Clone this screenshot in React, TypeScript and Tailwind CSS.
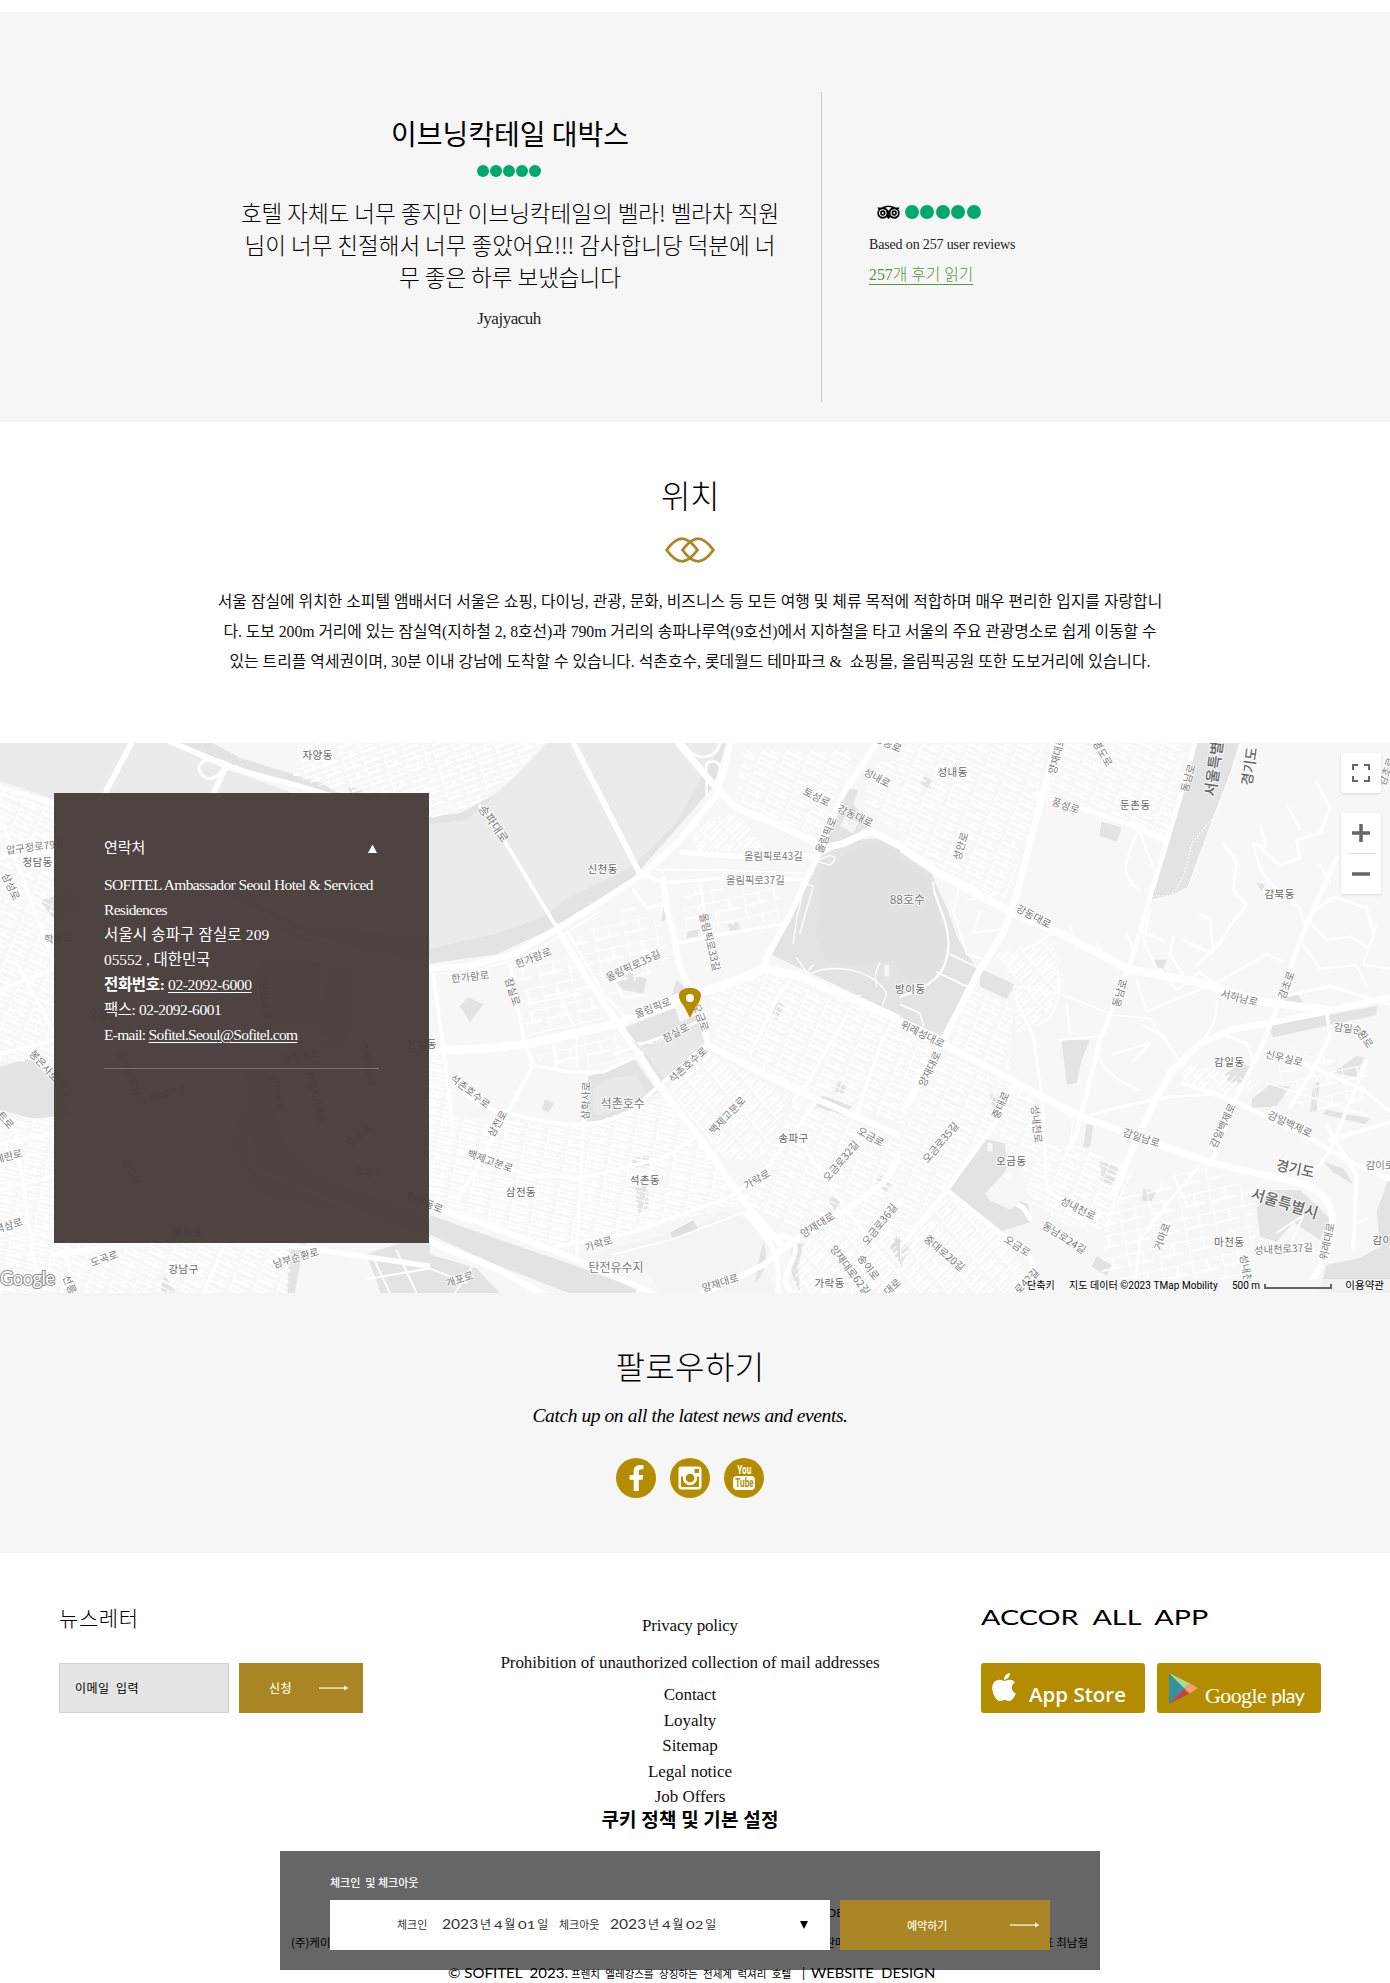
import React from "react";
import { FaApple, FaFacebookF } from "react-icons/fa";

const KR = "font-['Noto_Sans_CJK_KR',sans-serif]";
const SERIF = "font-['Liberation_Serif','Noto_Sans_CJK_KR',serif]";

/* ---------- Map data: three neighbouring sheets, each with its own grid ---------- */

type Label = [string, number, number, number, number?, number?];
type Shape = [string, string];
type Road = [string, number];

interface Sheet {
  x: number;
  width: number;
  areas: Shape[];
  blocks: [string, string][];
  roads: Road[];
  after: Shape[];
  labels: Label[];
}

const WATER = "#ebebeb";
const PARK = "#e3e3e3";
const LAND = "#f7f7f7";

const west: Sheet = {
  x: 0,
  width: 1410,
  areas: [
    ["M0 0H500L620 60 880 150 1287 225 1410 235V575L1287 570 900 520 600 370 300 240 160 165 0 115Z", WATER],
    ["M500 0L600 40 900 140 1287 225 1410 235V205L1287 200 1100 190 960 120 720 50 620 0Z", PARK],
    ["M1287 560L1410 575V610L1287 615 900 560 600 400 640 390 900 520Z", PARK],
    ["M120 450L220 420 240 470 160 500Z", PARK],
    ["M0 915L90 890 160 960 215 1050 100 1060 0 1035Z", PARK],
    ["M780 620H960L950 800 780 780ZM980 650L1060 640 1040 870 960 850Z", PARK],
    ["M730 930H810L830 1100 940 1220 1287 1340 1410 1390V1470L1100 1330 780 1270 700 1140Z", PARK],
    ["M1100 1440L1260 1390 1410 1450V1568H1150Z", PARK],
    ["M490 1490L540 1568H480ZM870 1410H920L900 1470 880 1568H860Z", PARK],
    ["M1040 130L1090 140 1060 160Z", PARK],
  ],
  blocks: [
    ["M0 130L160 180V900L0 900Z", "url(#g2)"],
    ["M0 1060L162 1060V1568H0Z", "url(#g1)"],
    ["M900 0H1410V190L1287 200 1100 180 880 100Z", "url(#g3)"],
    ["M162 1408H880L860 1568H162Z", "url(#g2)"],
    ["M1287 1000H1410V1370L1287 1330Z", "url(#g1)"],
    ["M300 700H720V1200L400 1350 180 1200Z", "url(#g2)"],
  ],
  roads: [
    ["M0 132L160 178 300 250 600 400 900 540 1287 640 1410 630", 12],
    ["M0 150L160 198", 4],
    ["M395 8L320 140 280 240", 16],
    ["M670 90L640 150 540 380", 16],
    ["M500 0L700 80 900 130 1040 170 1287 210 1410 185", 16],
    ["M690 70C640 40 580 60 600 90S650 110 670 80", 9],
    ["M720 80C700 60 660 90 650 130", 8],
    ["M0 330L160 310M0 210L120 520 160 620", 9],
    ["M0 880L162 840M0 700L162 640M60 640L162 820", 10],
    ["M0 1130L160 1100M0 1260L162 1220M40 1060L120 1568", 10],
    ["M162 1440L500 1400 900 1420 1410 1490", 15],
    ["M700 600L720 900 760 1200 1287 1400 1410 1460", 18],
    ["M600 1568L680 1400 690 1250M220 1568L200 1420", 8],
    ["M160 620L500 760 1287 880 1410 870", 14],
    ["M1120 1450L1180 1568M1190 1430L1260 1568M1100 1510L1410 1460", 6],
    ["M1287 700L1410 690M1300 720L1310 860M1380 640L1390 860", 7],
    ["M1287 1040L1410 1060M1300 1290L1370 1060", 6],
  ],
  after: [["M1375 775L1410 730V830L1385 800Z", PARK]],
  labels: [
    ["자양동", 953, 42, 0, 10.5, 500],
    ["압구정로79길", 105, 299, -7],
    ["청담동", 113, 343, 0, 10.5, 500],
    ["삼성로", 35, 412, 65],
    ["학동로", 175, 555, -5],
    ["봉은사로59길", 155, 935, 48],
    ["삼성동", 310, 770, 0, 10.5, 500],
    ["트로", 18, 1065, 48],
    ["테란로", 25, 1166, -15],
    ["역삼로", 25, 1360, -17],
    ["도곡로", 312, 1452, -20],
    ["강남구", 551, 1481, 0, 10.5, 500],
    ["남부순환로", 887, 1450, -16],
    ["대치동", 562, 1378, 0, 10.5, 500],
    ["삼성로", 398, 1210, 62],
    ["테헤란로", 505, 992, -14],
    ["테헤란로87길", 395, 947, 66],
    ["탄천동로", 832, 990, 80],
    ["올림픽로4길", 948, 1000, 75],
    ["올림픽로", 903, 886, -9],
    ["탄천동로", 800, 730, 82],
    ["백제고분로", 1105, 908, 76],
    ["도곡로", 1076, 1110, -40],
    ["유수지", 1105, 1213, 0, 11.5],
    ["탄천동로", 1275, 1296, 21],
    ["잠실동", 1265, 852, 0, 10.5, 500],
    ["선릉", 211, 1526, 68],
  ],
};

const centre: Sheet = {
  x: 430,
  width: 1440,
  areas: [
    ["M0 235C130 225 230 130 360 0H890L850 130 700 290 600 390 360 530 200 600 0 625Z", WATER],
    ["M890 0L850 130 700 290 610 385 350 535 200 600 0 625V585L210 540 350 490 400 450 530 390 620 345 740 230 810 110Z", PARK],
    ["M0 235L110 225 200 150 160 170 90 205 0 215Z", PARK],
    ["M1165 330L1265 280 1360 275 1440 300V785L1022 600Z", PARK],
    ["M1165 370L1260 310 1340 285 1440 330V690L1390 620 1270 630 1190 620 1150 540 1175 480Z", "#e1e1e1"],
    ["M1250 135L1285 140 1270 180 1320 240 1210 300 1190 290Z", PARK],
    ["M585 805L735 750 750 790 800 770 830 850 695 965 Z", PARK],
    ["M472 942L525 930 615 895 682 985 545 1068 472 1072Z", PARK],
    ["M0 1330L150 1380 400 1460 620 1535 610 1568H470L200 1470 0 1385Z", PARK],
    ["M0 1440L140 1480 230 1568H0Z", PARK],
    ["M700 1568L650 1480 450 1445 780 1370 880 1320 950 1340 1020 1420 1000 1470 1050 1568Z", "#f4f4f4"],
    ["M560 680L600 650 650 670 640 710 580 700Z", PARK],
    ["M90 745L115 720 160 740 120 790Z", PARK],
    ["M1155 1030L1175 995 1270 1025 1240 1050 1210 1040Z", PARK],
    ["M605 1170L655 1165 658 1195 610 1200ZM615 1255L655 1240V1310L625 1325Z", PARK],
    ["M720 1380L790 1345 805 1370 730 1395Z", "#dedede"],
    ["M1380 1420L1400 1390 1440 1400V1470L1410 1465Z", "#dedede"],
    ["M893 515L925 510 930 530 900 535ZM770 535L805 530V550L770 555Z", PARK],
    ["M1025 760L1045 730 1062 745 1040 785ZM1215 985L1225 955 1250 965 1240 992Z", PARK],
    ["M1195 1290L1215 1270 1235 1290 1215 1315ZM1335 1240L1350 1220 1385 1245 1370 1265Z", PARK],
    ["M335 1035L345 1005 372 1018 355 1042Z", PARK],
    ["M700 470L710 500 695 510ZM725 715L740 670 770 700Z", PARK],
    ["M1000 1410C1020 1450 1000 1500 975 1520L990 1440ZM1090 1410C1070 1460 1090 1520 1110 1545L1105 1480 1120 1410Z", PARK],
  ],
  blocks: [
    ["M0 0H350L240 110 120 190 0 220Z", "url(#g3)"],
    ["M430 560L600 460 700 520 720 620 540 720Z", "url(#g4)"],
    ["M840 690L1010 650 1440 800V1090L1100 970 850 850Z", "url(#g2)"],
    ["M830 870L1080 1000 1000 1180 860 1170 710 980Z", "url(#g5)"],
    ["M0 1050L460 1080 700 1000 850 1180 940 1300 400 1420 0 1310Z", "url(#g1)"],
    ["M0 890L50 880 80 1080 0 1060Z", "url(#g1)"],
    ["M1100 1000L1440 1140V1400L1100 1380 920 1290 1000 1180Z", "url(#g2)"],
    ["M940 30H1280L1220 220 1140 260 910 190Z", "url(#g2)"],
    ["M1330 60H1440V280L1300 190Z", "url(#g2)"],
    ["M260 630L430 600 520 780 290 830Z", "url(#g4)"],
    ["M320 830L540 810 600 890 500 920 320 900Z", "url(#g4)"],
    ["M760 420L1050 410V500L760 540Z", "url(#g4)"],
    ["M780 240L920 200 1000 300 800 320Z", "url(#g5)"],
    ["M1120 1400L1380 1350 1440 1568H1080Z", "url(#g5)"],
  ],
  roads: [
    ["M430 8L630 375", 17],
    ["M150 185L235 300 370 510 390 530", 11],
    ["M0 640L120 632 250 600 380 530 500 462 640 375 740 290 860 155 890 60 900 8", 17],
    ["M0 655L130 650 280 605 400 545 510 480", 4],
    ["M745 8L850 125 920 190 1050 240 1190 300 1240 290 1320 255 1440 310", 20],
    ["M1440 310L1400 285", 8],
    ["M830 155C830 60 820 60 850 60S870 100 850 130M760 8C800 70 860 50 870 8", 7],
    ["M755 315L900 325 1150 325", 14],
    ["M680 362L900 365 1150 375", 5],
    ["M700 400L900 385 1120 390", 9],
    ["M700 390L710 470 730 540 745 620 775 690 810 780 835 855 1000 935 1170 1010 1440 1120", 18],
    ["M610 420L650 470 700 460M640 375L700 400", 10],
    ["M810 400L835 540 860 650", 7],
    ["M740 570L900 540 1060 515", 8],
    ["M1340 8L1240 150 1170 310 1080 490 1010 610 1000 640", 17],
    ["M0 870L150 865 300 850 440 820 560 795 740 730 900 680 1000 640 1100 660 1230 710 1440 795", 24],
    ["M390 540L460 650 560 790 600 840 690 970 780 1080 860 1180 930 1280 1050 1410", 19],
    ["M415 540L520 710 590 780", 7],
    ["M550 880L640 850 700 830 800 790", 8],
    ["M300 910L420 930 520 930 610 890 720 830", 9],
    ["M470 940L460 1090 440 1440", 8],
    ["M80 940C90 1020 200 1040 300 1060S500 1090 600 1040L830 850", 11],
    ["M10 660L40 860 70 1100M240 630L280 830 310 910 240 1030 150 1180 80 1290", 10],
    ["M90 1150L300 1220 460 1225 700 1170 800 1110", 9],
    ["M0 1310L150 1350 400 1440 660 1545", 17],
    ["M0 1405L200 1480 370 1568", 18],
    ["M370 1420L600 1380 900 1280 1010 1200 1160 1010", 9],
    ["M550 1440L720 1400 950 1320", 5],
    ["M780 1568L1000 1470 1080 1410 1240 1320 1360 1240 1420 1150", 17],
    ["M1000 1390C1080 1380 1120 1400 1080 1470S1100 1550 1120 1568M950 1330C1030 1400 1060 1460 1040 1568", 15],
    ["M1130 1150L1230 1290 1360 1450 1440 1520", 8],
    ["M1250 770L1140 950 1090 1010M1060 690L960 880M1360 830L1280 1050", 8],
    ["M380 700L430 800M290 740L450 710M370 860L380 920M440 830V910", 6],
    ["M560 690L580 720 650 715M620 780L740 745", 7],
    ["M1110 400L1150 410 1110 540M1120 420L1100 500 1090 570", 4],
    ["M1130 660C1200 620 1330 640 1370 710L1350 760M1100 610L1130 650 1150 630M1340 690C1330 650 1345 630 1350 625", 4],
    ["M1260 720L1290 715M1160 340C1210 310 1230 330 1200 350Z", 4],
    ["M620 850C650 840 690 860 680 845", 5],
    ["M130 1470L60 1568M0 1480L110 1520", 5],
    ["M700 970L820 1130", 6],
  ],
  after: [
    ["M1363 630H1378V662H1363Z", "#f4f4f4"],
    ["M600 840L640 860 800 805 820 850 700 945 650 885Z", "#e9e9e9"],
    ["M490 975L540 945 620 940 650 990 540 1045 490 1050Z", "#e9e9e9"],
    ["M1230 240L1245 215 1285 230 1270 262Z", "#f4f4f4"],
  ],
  labels: [
    ["송파대로", 193, 235, 55, 11.5],
    ["신천동", 518, 361, 0, 10.5, 500],
    ["올림픽로43길", 1030, 326, 0],
    ["올림픽로37길", 976, 394, 0],
    ["토성로", 1161, 160, 27],
    ["성내로", 1342, 106, 28],
    ["강동대로", 1277, 213, 25],
    ["올림픽로", 1186, 268, -67],
    ["영동로", 1375, 10, 25],
    ["올림픽로33길", 842, 567, 76],
    ["올림픽로35길", 608, 632, -25],
    ["한가람로", 309, 610, -21],
    ["한가람로", 120, 663, -6],
    ["잠실로", 250, 706, 72],
    ["올림픽로", 668, 750, -21],
    ["오금로", 814, 778, 70],
    ["잠실로", 736, 820, -28],
    ["석촌호수로", 772, 910, -42],
    ["석촌호수로", 122, 984, 38],
    ["석촌호수", 578, 1016, 0, 12],
    ["삼학사로", 465, 1012, -88],
    ["삼전로", 200, 1075, -60],
    ["백제고분로", 181, 1179, 20],
    ["백제고분로", 890, 1052, -46],
    ["송파구", 1091, 1114, 0, 10.5, 500],
    ["오금로", 1323, 1111, 29],
    ["오금로32길", 1231, 1180, -50],
    ["석촌동", 645, 1232, 0, 10.5, 500],
    ["삼전동", 273, 1266, 0, 10.5, 500],
    ["가락로", 979, 1231, -30],
    ["가락로", 505, 1411, -18],
    ["탄전유수지", 558, 1476, 0, 12],
    ["양재대로", 1161, 1358, -32],
    ["양재대로", 870, 1520, -17],
    ["오금로36길", 1347, 1357, -52],
    ["양재대로62길", 1262, 1485, 53],
    ["송이로", 1317, 1477, 53],
    ["가락동", 1199, 1521, 0, 10.5, 500],
    ["대로", 1385, 1532, -42],
    ["개포로", 88, 1510, -18],
  ],
};

const east: Sheet = {
  x: 900,
  width: 1470,
  areas: [
    ["M0 310L90 355 105 400 140 470 175 560 230 640 200 690 130 830 0 775Z", PARK],
    ["M0 330L90 385 110 470 145 550 130 640 90 700 0 660Z", "#e1e1e1"],
    ["M150 600L235 640 215 690 130 655ZM240 640L345 685 320 725 240 690Z", PARK],
    ["M893 0H1020L985 110 940 220 865 410 820 432 755 445 800 310 870 80Z", PARK],
    ["M605 228L665 245 650 285 598 268ZM60 120L75 98 98 115 88 142Z", PARK],
    ["M150 1260L250 1115 315 1130 320 1200 280 1260 385 1300 390 1350 290 1380Z", PARK],
    ["M485 840H570L545 895 530 960 500 965Z", PARK],
    ["M970 940L1020 905 1050 915 1040 960 990 960Z", PARK],
    ["M1100 800L1430 745V770L1120 832Z", PARK],
    ["M1055 1005L1110 965 1170 970 1130 1025 1055 1030Z", PARK],
    ["M1300 930L1370 885 1390 890 1370 945Z", PARK],
    ["M1070 1310L1110 1260 1200 1260 1290 1340 1260 1400 1180 1350 1130 1405 1080 1390Z", PARK],
    ["M1430 1320L1470 1220V1568H1250L1280 1470 1380 1450 1440 1420Z", PARK],
    ["M560 1075L580 1080 570 1140 550 1140ZM600 1180L655 1195 640 1250 605 1240ZM730 1255L768 1265 755 1292 725 1290Z", PARK],
    ["M590 1445L635 1470 620 1500 575 1475ZM0 1400L30 1410 5 1475 0 1470ZM270 990L320 1000 310 1035 275 1030Z", PARK],
    ["M1150 720L1190 710 1210 735 1160 748ZM760 615H800L790 640H765ZM1070 400L1095 405 1085 425Z", PARK],
    ["M1240 970L1260 950 1250 1040 1230 1040ZM1280 1035L1410 1060 1395 1075 1270 1048Z", PARK],
    ["M1270 1180L1330 1200 1360 1245 1300 1210Z", PARK],
  ],
  blocks: [
    ["M0 0H440L410 180 320 450 110 370 0 290Z", "url(#g2)"],
    ["M450 0H860L800 280 720 240 440 150Z", "url(#g2)"],
    ["M210 700L340 740 330 930 150 860Z", "url(#g2)"],
    ["M280 600L460 560 490 680 420 800 350 820 340 680Z", "url(#g5)"],
    ["M0 800L110 850 400 990 400 1130 250 1110 140 1250 0 1400Z", "url(#g2)"],
    ["M320 1120L540 1140 700 1200 640 1380 500 1360 400 1300Z", "url(#g2)"],
    ["M0 1400L130 1270 330 1390 400 1568H0Z", "url(#g5)"],
    ["M620 1300L900 1190 1060 1260 1070 1400 980 1568H600Z", "url(#g4)"],
    ["M840 900L1080 960 1000 1010 850 960Z", "url(#g5)"],
    ["M1100 870L1400 900 1390 1060 1170 1020Z", "url(#g4)"],
  ],
  roads: [
    ["M0 300L110 370 230 430 330 480 500 550 680 640 900 680 1100 735 1280 755", 22],
    ["M470 8L420 180 350 430 310 540 235 650 135 830 20 1020", 20],
    ["M885 8L850 130 750 440 700 600 660 700 600 840 530 1100 510 1140", 14],
    ["M0 785L150 860 440 1005 560 1060 920 1180 1100 1220 1200 1240C1300 1270 1310 1340 1290 1420L1240 1510", 19],
    ["M410 150L540 190 700 240 800 285", 13],
    ["M1470 720L1280 760 1120 790 1000 810 900 850 820 920 770 1000 700 1140 640 1270", 18],
    ["M1310 330L1200 560 1140 730 1080 870 1010 1000 940 1170", 14],
    ["M1470 740L1290 690 1140 720", 8],
    ["M1280 760L1290 830 1240 920 1170 1030M1400 900L1290 1150 1260 1190", 10],
    ["M850 960L1000 1010 1200 1100 1350 1180 1470 1230", 13],
    ["M1100 870L1250 920 1390 980 1470 1040", 10],
    ["M350 730L400 830 420 960 430 1040 440 1260 500 1300 590 1340", 8],
    ["M340 690L480 710 640 770 750 780 840 900", 4],
    ["M540 1060L650 1030 800 1000 960 990", 8],
    ["M140 1260L300 1380 390 1440 420 1568", 14],
    ["M0 1420L140 1260 280 1080 340 970", 13],
    ["M100 400C95 440 150 500 145 580S90 690 0 720", 6],
    ["M150 600L240 640M110 650L200 690M0 740L60 765 70 800", 5],
    ["M720 240C680 330 650 380 720 420M720 260L770 380", 7],
    ["M970 290L1010 340 1000 420 1040 460 990 520 960 570 890 630", 8],
    ["M1250 120L1290 190 1260 260 1190 280 1200 330 1140 350 1080 300", 8],
    ["M1080 240L1100 300 1060 290 1080 360 1110 400 1200 470 1210 510", 7],
    ["M820 550L810 600 850 660M750 480L730 560 770 640M850 560L940 600 930 500 900 490M730 540L790 560M740 500L720 520", 7],
    ["M1160 180L1200 250M1220 500L1280 560 1350 550 1400 580M1240 480L1300 440 1400 470 1420 540M1290 400L1260 350", 7],
    ["M1200 560L1260 640 1370 630 1400 690M1430 520L1390 630 1470 640", 6],
    ["M710 670L740 760 870 710 950 680 1100 600 1150 620M780 640L830 700 900 650 960 700 1060 720", 6],
    ["M590 850C590 920 660 960 720 980M640 880L750 850 700 900M480 840L590 830M500 740L510 820", 6],
    ["M950 700C960 800 920 840 850 890M730 800L790 830 840 900 800 930M960 820L1040 850 1060 900", 7],
    ["M1180 860C1200 900 1240 920 1260 960", 4],
    ["M1280 1080L1370 1220 1360 1420M1290 1120L1470 1070", 12],
    ["M1360 1360L1400 1340M1130 1380L1210 1330 1160 1440", 5],
    ["M700 1140L640 1300 620 1360M900 1190L800 1300 720 1400 700 1568M820 1220L860 1300", 7],
    ["M450 640C490 620 490 760 430 790M370 590L460 540M240 480L220 540 300 530M180 400L160 480 200 600 240 610M200 450L290 430", 5],
    ["M320 1220L300 1270 370 1310 390 1340", 14],
    ["M440 1010L520 1060 510 1130", 4],
    ["M510 520L530 580M590 570L610 600M680 540L700 590", 6],
    ["M1100 960L1400 1050", 4],
    ["M1030 0L985 110 940 220 865 410", 3],
  ],
  after: [
    ["M255 1270L310 1215 360 1290 330 1315 270 1290ZM262 1128H278V1152H262Z", LAND],
  ],
  labels: [
    ["성내동", 158, 91, 0, 10.5, 500],
    ["양재대로", 468, 45, -75],
    ["명도로", 610, 38, 60],
    ["동남로", 862, 108, -74],
    ["서울특별", 938, 83, -82, 15, 500],
    ["경기도", 1045, 76, -82, 14, 500],
    ["풍성로", 498, 184, 19],
    ["둔촌동", 706, 184, 0, 10.5, 500],
    ["성안로", 180, 299, -72],
    ["88호수", 22, 445, 0, 12],
    ["강동대로", 402, 494, 28],
    ["감북동", 1139, 432, 0, 10.5, 500],
    ["방이동", 31, 699, 0, 10.5, 500],
    ["동남로", 657, 710, -73],
    ["서하남로", 1019, 722, 14],
    ["감초로", 1157, 688, -69],
    ["위례성대로", 69, 824, 26],
    ["양재대로", 87, 922, -64],
    ["감일순", 1344, 808, 6],
    ["환로", 1398, 838, 55],
    ["감일동", 988, 902, 0, 10.5, 500],
    ["신우실로", 1153, 891, 14],
    ["중대로", 300, 1024, -66],
    ["성내천로", 412, 1078, 84],
    ["오금로35길", 120, 1128, -50],
    ["감일백제로", 966, 1081, -65],
    ["감일백제로", 1171, 1076, 25],
    ["감일남로", 725, 1114, 18],
    ["오금동", 334, 1179, 0, 10.5, 500],
    ["경기도", 1186, 1200, 12, 14, 500],
    ["감이로", 1440, 1192, 0],
    ["서울특별시", 1155, 1297, 17, 15, 500],
    ["성내천로", 535, 1312, 27],
    ["동남로24길", 494, 1394, 33],
    ["오금로", 353, 1417, 33],
    ["중대로20길", 134, 1437, 40],
    ["거마로", 784, 1392, -70],
    ["마천동", 988, 1406, 0, 10.5, 500],
    ["성내천로37길", 1150, 1425, -3],
    ["위례대로", 1279, 1406, -78],
    ["감이동", 1463, 1402, 0, 10.5, 500],
    ["성내천", 1040, 1482, 80],
    ["로42길", 378, 1516, -46],
    ["감초로", 1457, 90, -70],
  ],
};

const sheets = [west, centre, east];
const SX = 1 / 3;
const SY = 1 / 2.8;

function Pattern({ id, angle, w, h }: { id: string; angle: number; w: number; h: number }) {
  return (
    <pattern id={id} width={w} height={h} patternUnits="userSpaceOnUse" patternTransform={`rotate(${angle})`}>
      <path d={`M0 0H${w}M0 ${h / 2}H${w * 0.8}M0 0V${h}M${w / 2} 0V${h / 2}`} stroke="#fff" strokeWidth="5" fill="none" />
    </pattern>
  );
}

function CityMap() {
  return (
    <svg className="block h-[550px] w-[1390px]" viewBox="0 0 1390 550">
      <defs>
        <Pattern id="g1" angle={12} w={64} h={24} />
        <Pattern id="g2" angle={24} w={66} h={30} />
        <Pattern id="g3" angle={-18} w={60} h={32} />
        <Pattern id="g4" angle={-12} w={92} h={62} />
        <Pattern id="g5" angle={-42} w={62} h={28} />
        {sheets.map((s, i) => (
          <clipPath key={i} id={`sheet${i}`}>
            <rect x="0" y="0" width={i === 0 ? 1290 : i === 1 ? 1410 : s.width} height="1568" />
          </clipPath>
        ))}
      </defs>
      <rect width="1390" height="550" fill={LAND} />
      {sheets.map((s, i) => (
        <g key={i} transform={`translate(${s.x} -3) scale(${SX} ${SY})`} clipPath={`url(#sheet${i})`}>
          {s.areas.map(([d, c], k) => (
            <path key={k} d={d} fill={c} />
          ))}
          {s.blocks.map(([d, c], k) => (
            <path key={k} d={d} fill={c} />
          ))}
          {s.roads.map(([d, w], k) => (
            <path key={k} d={d} fill="none" stroke="#fff" strokeWidth={w} strokeLinejoin="round" strokeLinecap="round" />
          ))}
          {s.after.map(([d, c], k) => (
            <path key={k} d={d} fill={c} />
          ))}
        </g>
      ))}
      <path d="M1152 153L1170 152 1178 145 1185 128 1192 100 1215 72" fill="none" stroke="#fff" strokeWidth="1.3" strokeDasharray="1.5 2" />
      {sheets.map((s, i) =>
        s.labels.map(([t, x, y, a, size = 10.3, weight = 400], k) => {
          const px = s.x + x * SX;
          const py = y * SY - 3.8;
          return (
            <text
              key={`${i}-${k}`}
              transform={`translate(${px} ${py}) rotate(${a})`}
              textAnchor="middle"
              dominantBaseline="central"
              fontSize={size}
              fontWeight={size > 12 ? 500 : 400}
              letterSpacing={weight === 500 && size < 12 ? 0.5 : 0}
              fill={weight === 500 ? "#666" : "#7c7c7c"}
              stroke="#fff"
              strokeWidth="2"
              strokeOpacity=".75"
              paintOrder="stroke"
              className={KR}
            >
              {t}
            </text>
          );
        })
      )}
      <path d="M690 275L682 259.5C675 251 681 245 690 245S705 251 698 259.500Z" fill="#b48c00" />
      <circle cx="690" cy="255" r="10" fill="#b48c00" />
      <circle cx="690" cy="255" r="4" fill="#fff" />
      <text x="0" y="542" fontSize="18.500" fill="#fff" stroke="#8c8c8c" strokeWidth="2" paintOrder="stroke" textLength="55" className="font-['Lato',sans-serif]">
        Google
      </text>
    </svg>
  );
}

/* ---------- Small pieces ---------- */

function LongArrow() {
  return (
    <svg className="h-[6px] w-[30px]" viewBox="0 0 30 6" fill="#fdf6df">
      <rect y="2.400" width="26" height="1.300" />
      <path d="M25 .5L29.500 3 25 5.500Z" />
    </svg>
  );
}

function Owl() {
  return (
    <svg className="h-[14px] w-[23px]" viewBox="0 0 23 14">
      <path d="M.3 2.600H4.600C8 .1 15 .1 18.400 2.600H22.700L21.400 4.500A5.600 5.600 0 0 1 13.300 12.200L11.500 14 9.700 12.200A5.600 5.600 0 0 1 1.600 4.500Z" fill="#000" />
      <circle cx="5.800" cy="8" r="3.800" fill="#f6f6f6" />
      <circle cx="17.200" cy="8" r="3.800" fill="#f6f6f6" />
      <circle cx="5.800" cy="8" r="2.700" fill="#000" />
      <circle cx="17.200" cy="8" r="2.700" fill="#000" />
      <circle cx="5.800" cy="8" r="1.100" fill="#f6f6f6" />
      <circle cx="17.200" cy="8" r="1.100" fill="#f6f6f6" />
      <path d="M8 2.700C10 1.900 13 1.900 15 2.700 13.500 3.400 12 4.600 11.500 6 11 4.600 9.500 3.400 8 2.700Z" fill="#f6f6f6" />
    </svg>
  );
}

function Reviews() {
  return (
    <section className="mt-3 flex h-[410px] shrink-0 bg-[#f6f6f6] pt-20">
      <div className="ml-[200px] flex h-[310px] w-[622px] flex-col items-center border-r border-[#c9c9c9] pt-[21px] pr-px">
        <h3 className={`${KR} text-[28px] leading-[40px] text-black`}>이브닝칵테일 대박스</h3>
        <div className="mt-[12px] flex gap-px pr-0.5">
          {[0, 1, 2, 3, 4].map((i) => (
            <span key={i} className="size-3 rounded-full bg-[#00aa6c]" />
          ))}
        </div>
        <div className={`${KR} mt-[19px] text-center text-[22.5px] leading-8 font-light whitespace-nowrap text-black`}>
          <p>호텔 자체도 너무 좋지만 이브닝칵테일의 벨라! 벨라차 직원</p>
          <p>님이 너무 친절해서 너무 좋았어요!!! 감사합니당 덕분에 너</p>
          <p>무 좋은 하루 보냈습니다</p>
        </div>
        <p className={`${SERIF} mt-[15px] pr-0.5 text-[17px] leading-6 tracking-[-0.5px] text-[#222]`}>Jyajyacuh</p>
      </div>
      <div className="ml-[47px] pt-[113px]">
        <div className="flex items-center pl-2">
          <Owl />
          <div className="ml-[5px] flex gap-[1.4px]">
            {[0, 1, 2, 3, 4].map((i) => (
              <span key={i} className="size-[14px] rounded-full bg-[#00aa6c]" />
            ))}
          </div>
        </div>
        <p className={`${SERIF} mt-[14px] text-[14px] leading-6 tracking-[-0.15px] text-[#222]`}>Based on 257 user reviews</p>
        <a className={`${SERIF} mt-[6px] block text-[15.8px] leading-6 font-light text-[#5b9244] underline underline-offset-4`}>257개 후기 읽기</a>
      </div>
    </section>
  );
}

function Location() {
  return (
    <section className="flex h-[321px] shrink-0 flex-col items-center pt-[48px] pr-[10px]">
      <h2 className={`${KR} text-[32px] leading-[48px] font-light tracking-[-0.5px] text-black`}>위치</h2>
      <svg className="mt-[19px] h-[26px] w-[50px]" viewBox="0 0 50 26" fill="none" stroke="#ab8724" strokeWidth="2.900" strokeLinejoin="round">
        <path d="M1.600 13C6 7 11 1.600 17 1.600S28 7 32.500 13C28 19 23 24.400 17 24.400S6 19 1.600 13Z" />
        <path d="M48.400 13C44 7 39 1.600 33 1.600S22 7 17.500 13C22 19 27 24.400 33 24.400S44 19 48.400 13Z" />
      </svg>
      <div className={`${SERIF} mt-[24px] text-center text-[15.85px] leading-[30px] whitespace-nowrap text-[#111]`}>
        <p>서울 잠실에 위치한 소피텔 앰배서더 서울은 쇼핑, 다이닝, 관광, 문화, 비즈니스 등 모든 여행 및 체류 목적에 적합하며 매우 편리한 입지를 자랑합니</p>
        <p className="tracking-[-0.08px]">다. 도보 200m 거리에 있는 잠실역(지하철 2, 8호선)과 790m 거리의 송파나루역(9호선)에서 지하철을 타고 서울의 주요 관광명소로 쉽게 이동할 수</p>
        <p>있는 트리플 역세권이며, 30분 이내 강남에 도착할 수 있습니다. 석촌호수, 롯데월드 테마파크 &amp;&nbsp; 쇼핑몰, 올림픽공원 또한 도보거리에 있습니다.</p>
      </div>
    </section>
  );
}

function ContactCard() {
  return (
    <div className={`${SERIF} absolute top-[50px] left-[54px] h-[450px] w-[375px] bg-[#463b38]/96 px-[50px] pt-[43px] text-white`}>
      <div className="flex items-center justify-between pr-[2px] text-[15px] leading-6">
        <span>연락처</span>
        <svg className="mt-[1px] size-[9px]" viewBox="0 0 9 9" fill="#fff">
          <path d="M4.500 .5L9 9H0Z" />
        </svg>
      </div>
      <div className="mt-[12px] text-[15.5px] leading-[25px] whitespace-nowrap">
        <p className="tracking-[-0.6px]">SOFITEL Ambassador Seoul Hotel &amp; Serviced</p>
        <p className="tracking-[-0.7px]">Residences</p>
        <p className="tracking-[0.15px]">서울시 송파구 잠실로 209</p>
        <p className="tracking-[-0.1px]">05552 , 대한민국</p>
        <p className="tracking-[-0.35px]"><b>전화번호:</b> <a className="underline underline-offset-2">02-2092-6000</a></p>
        <p className="tracking-[-0.45px]">팩스: 02-2092-6001</p>
        <p className="tracking-[-0.72px]">E-mail: <a className="underline underline-offset-2">Sofitel.Seoul@Sofitel.com</a></p>
      </div>
      <div className="mt-[21px] h-px bg-[#7c726f]" />
    </div>
  );
}

function MapSection() {
  return (
    <section className="relative h-[550px] shrink-0 overflow-hidden">
      <CityMap />
      <ContactCard />
      <div className="absolute top-[10px] right-[9px] flex flex-col gap-5">
        <button className="flex size-10 items-center justify-center rounded-xs bg-white shadow">
          <svg className="size-[18px]" viewBox="0 0 18 18" fill="#666">
            <path d="M0 0H6V2H2V6H0ZM12 0H18V6H16V2H12ZM0 12H2V16H6V18H0ZM16 12H18V18H12V16H16Z" />
          </svg>
        </button>
        <div className="flex h-[81px] w-10 flex-col items-center rounded-xs bg-white shadow">
          <button className="flex h-10 items-center">
            <svg className="size-[18px]" viewBox="0 0 18 18" fill="#666"><path d="M7.250 0H10.750V7.250H18V10.750H10.750V18H7.250V10.750H0V7.250H7.250Z" /></svg>
          </button>
          <span className="h-px w-[30px] bg-[#e0e0e0]" />
          <button className="flex h-10 items-center">
            <svg className="size-[18px]" viewBox="0 0 18 18" fill="#666"><path d="M0 7.250H18V10.750H0Z" /></svg>
          </button>
        </div>
      </div>
      <div className="absolute right-0 bottom-0 flex h-[14px] w-[363px] items-center bg-[#f5f5f5]/80 font-['Roboto','Noto_Sans_CJK_KR',sans-serif] text-[10px] leading-[14px] whitespace-nowrap text-black">
        <span className="w-[42px]">단축키</span>
        <span className="w-[163px] tracking-[0.05px]">지도 데이터 ©2023 TMap Mobility</span>
        <span>500 m</span>
        <span className="ml-[4px] h-[5px] w-[68px] border-x-2 border-b-2 border-[#666]" />
        <span className="ml-auto pr-[6px] text-[10.5px]">이용약관</span>
      </div>
    </section>
  );
}

function Follow() {
  return (
    <section className="flex h-[260px] shrink-0 flex-col items-center bg-[#f6f6f6] pt-[48px] pr-[10px]">
      <h2 className={`${KR} text-[32px] leading-[48px] font-light tracking-[0.4px] text-black`}>팔로우하기</h2>
      <p className={`${SERIF} mt-[13px] text-[19.5px] leading-7 tracking-[-0.42px] text-black italic`}>Catch up on all the latest news and events.</p>
      <div className="mt-[28px] flex gap-[14px]">
        <a className="flex size-10 items-center justify-center rounded-full bg-[#b48c00] pb-px text-white">
          <FaFacebookF className="h-[26px] w-[17px]" />
        </a>
        <a className="flex size-10 items-center justify-center rounded-full bg-[#b48c00]">
          <svg className="size-6" viewBox="0 0 24 24">
            <path fillRule="evenodd" d="M3.500 .5H20.500A3 3 0 0 1 23.500 3.500V20.500A3 3 0 0 1 20.500 23.500H3.500A3 3 0 0 1 .5 20.500V3.500A3 3 0 0 1 3.500 .5ZM16.500 3V7H21V3ZM3 10.500V20A1.200 1.200 0 0 0 4.200 21H19.800A1.200 1.200 0 0 0 21 20V10.500H18.800A7 7 0 1 1 5.200 10.500Z" fill="#fff" />
            <circle cx="12" cy="12" r="5.600" fill="#b48c00" stroke="#fff" strokeWidth="2.500" />
          </svg>
        </a>
        <a className="flex size-10 flex-col items-center rounded-full bg-[#b48c00] pt-[6px] font-['Roboto',sans-serif] text-[12px] leading-3 font-bold text-white">
          <span className="scale-x-[.68]">You</span>
          <span className="flex h-[14px] w-[22px] items-center justify-center rounded-[4px] bg-white text-[#b48c00]">
            <span className="scale-x-[.68]">Tube</span>
          </span>
        </a>
      </div>
    </section>
  );
}

function Footer() {
  return (
    <footer className="relative h-[430px] shrink-0 overflow-hidden">
      <div className="flex h-[298px] justify-between">
        <div className="ml-[59px] w-[340px] pt-[49px]">
          <h4 className={`${KR} text-[21px] leading-[30px] font-light tracking-[0.6px] text-black`}>뉴스레터</h4>
          <div className={`${KR} mt-[31px] flex gap-[10px] text-[12px]`}>
            <div className="flex h-[50px] w-[170px] items-center border border-[#d2d2d2] bg-[#e5e5e5] pl-[15px] text-[12px] tracking-[0.5px] text-black">이메일&nbsp; 입력</div>
            <button className="flex h-[50px] w-[124px] items-center justify-between bg-[#a98525] pr-[14px] pl-[30px] font-medium tracking-[0.5px] text-[#fdf6df]">
              신청
              <LongArrow />
            </button>
          </div>
        </div>
        <nav className={`${SERIF} flex flex-col items-center pt-[61px] text-[17px] tracking-[-0.04px] whitespace-nowrap text-[#111]`}>
          <a className="h-[37px] leading-6 tracking-[-0.2px]">Privacy policy</a>
          <a className="h-[32px] leading-6">Prohibition of unauthorized collection of mail addresses</a>
          {["Contact", "Loyalty", "Sitemap", "Legal notice", "Job Offers"].map((t) => (
            <a key={t} className="h-[25.5px] leading-6">{t}</a>
          ))}
          <a className={`${KR} mt-[-4px] text-[19px] leading-6 font-bold tracking-[0.2px] text-black`}>쿠키 정책 및 기본 설정</a>
        </nav>
        <div className="w-[409px] pt-[49px]">
          <h4 className="w-max origin-left scale-x-[1.37] font-['Lato',sans-serif] text-[21px] leading-[30px] text-black">ACCOR&nbsp; ALL&nbsp; APP</h4>
          <div className="mt-[31px] flex gap-3">
            <a className="flex h-[50px] w-[164px] rounded-[3px] bg-[#b48c00] pt-[8px] pl-[8px] text-white">
              <FaApple className="h-[32px] w-[30px]" />
              <span className="mt-[9px] ml-[10px] font-['Open_Sans',sans-serif] text-[20.5px] leading-7 font-semibold">App Store</span>
            </a>
            <a className="flex h-[50px] w-[164px] rounded-[3px] bg-[#b48c00] pt-[9px] pl-3 text-white">
              <svg className="h-8 w-[29px] shrink-0" viewBox="0 0 29 32">
                <path d="M0 1L15.500 16.500 0 32Z" fill="#3591a0" />
                <path d="M0 1L21 11.500 15.500 16.500Z" fill="#a5dc9a" />
                <path d="M0 32L15.500 16.500 20.500 21.500Z" fill="#c8404e" />
                <path d="M20.500 11.300L29 16 20.500 21.600 15.500 16.500Z" fill="#f2a36b" />
              </svg>
              <span className={`${SERIF} mt-[10px] ml-[7px] text-[22px] leading-7 tracking-[-0.6px]`}>Google</span>
              <span className="mt-[10px] ml-[5px] font-['Lato',sans-serif] text-[19.5px] leading-7 tracking-[-0.5px]">play</span>
            </a>
          </div>
        </div>
      </div>
      <div className={`${KR} ml-[291px] w-[797px] pt-[51px] text-[11.5px] text-black`}>
        <p className="pl-[536px] font-['Lato',sans-serif] text-[12px] leading-[22px]">DE</p>
        <div className="flex h-[18px] pt-[7px] leading-[22px]">
          <span>(주)케이</span>
          <span className="ml-[494px]">판매</span>
          <span className="ml-auto">표 최남철</span>
        </div>
      </div>
      <p className="mt-[19px] flex items-center pl-[448px] font-['Lato','Noto_Sans_CJK_KR',sans-serif] text-[12.5px] leading-[26px] whitespace-nowrap text-black">
        <span className="w-[123px]"><span className="inline-block origin-left scale-x-[1.2]">© SOFITEL&nbsp; 2023.</span></span>
        <span className="w-[231px] text-[10.5px]">프렌치&nbsp; 엘레강스를&nbsp; 상징하는&nbsp; 전세계&nbsp; 럭셔리&nbsp; 호텔</span>
        <span className="w-[9px]">|</span>
        <span className="inline-block origin-left scale-x-[1.18]">WEBSITE&nbsp; DESIGN</span>
      </p>
    </footer>
  );
}

/* Korean date with widened numerals */
function WideDate({ day }: { day: string }) {
  return (
    <span className="text-[12px]">
      <span className="inline-block w-[38px] origin-left text-[12.5px]"><span className="inline-block origin-left scale-x-[1.25]">2023</span></span>
      년&nbsp;
      <span className="inline-block w-[10px]"><span className="inline-block origin-left scale-x-[1.25]">4</span></span>
      월&nbsp;
      <span className="inline-block w-[19px]"><span className="inline-block origin-left scale-x-[1.25]">{day}</span></span>
      일
    </span>
  );
}

function BookingBar() {
  return (
    <div className={`${KR} absolute top-[1851px] left-[280px] h-[119px] w-[820px] bg-black/60 px-[50px] pt-5 text-[11px]`}>
      <p className="h-[29px] leading-[22px] font-medium text-white">체크인&nbsp;&nbsp;및 체크아웃</p>
      <div className="flex gap-[10px]">
        <div className="flex h-[50px] w-[500px] items-center bg-white pr-[22px] pl-[67px] font-['Lato','Noto_Sans_CJK_KR',sans-serif] whitespace-nowrap text-[#333]">
          <span className="w-[45px]">체크인</span>
          <span className="w-[117px]"><WideDate day="01" /></span>
          <span className="w-[51px]">체크아웃</span>
          <WideDate day="02" />
          <svg className="ml-auto size-2" viewBox="0 0 8 8"><path d="M0 0H8L4 8Z" /></svg>
        </div>
        <button className="flex h-[50px] w-[210px] items-center justify-between bg-[#a98525] pr-[10px] pl-[67px] font-medium text-[#fdf6df]">
          예약하기
          <LongArrow />
        </button>
      </div>
    </div>
  );
}

export default function App() {
  return (
    <main className="relative flex h-[1983px] w-[1390px] flex-col overflow-hidden bg-white">
      <Reviews />
      <Location />
      <MapSection />
      <Follow />
      <Footer />
      <BookingBar />
    </main>
  );
}
